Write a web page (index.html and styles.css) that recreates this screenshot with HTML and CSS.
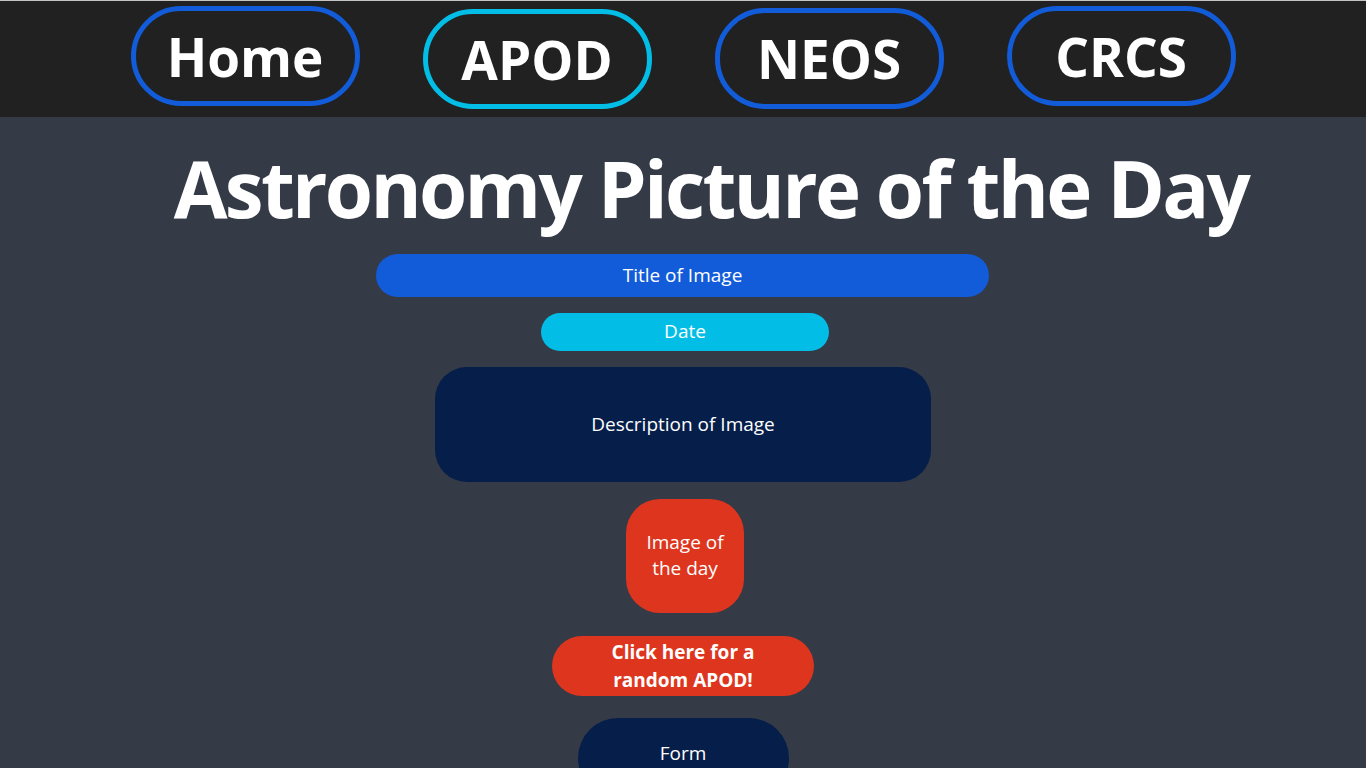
FILE: index.html
```html
<!DOCTYPE html>
<html lang="en">
<head>
<meta charset="utf-8">
<title>APOD</title>
<link rel="stylesheet" href="styles.css">
</head>
<body>
<nav class="nav">
  <a class="nav-btn" href="#">Home</a>
  <a class="nav-btn nav-btn--active" href="#">APOD</a>
  <a class="nav-btn nav-btn--neos" href="#">NEOS</a>
  <a class="nav-btn" href="#">CRCS</a>
</nav>
<main class="main">
  <h1 class="page-title">Astronomy Picture of the Day</h1>
  <div class="pill pill-title">Title of Image</div>
  <div class="pill pill-date">Date</div>
  <div class="pill pill-desc">Description of Image</div>
  <div class="pill pill-image">Image of<br>the day</div>
  <button class="pill pill-random">Click here for a<br>random APOD!</button>
  <div class="pill pill-form">Form</div>
</main>
</body>
</html>
```
FILE: styles.css
```css
* { box-sizing: border-box; }
html, body { margin: 0; padding: 0; }
body {
  background: #343a46;
  font-family: "Open Sans", "Liberation Sans", sans-serif;
  color: #fff;
  height: 768px;
  overflow: hidden;
}
.nav {
  background: #212121;
  border-top: 1px solid #c4c4c4;
  height: 117px;
  display: flex;
  justify-content: center;
  align-items: flex-start;
  gap: 63px;
  padding-top: 5px;
}
.nav-btn {
  width: 229px;
  height: 100px;
  border: 5px solid #125cda;
  border-radius: 50px;
  display: flex;
  align-items: center;
  justify-content: center;
  color: #fff;
  text-decoration: none;
  font-weight: 700;
  font-size: 53px;
  letter-spacing: 0;
}
.nav-btn--active { border-color: #02bee6; margin-top: 3px; }
.nav-btn--neos { margin-top: 2px; height: 101px; }
.main {
  display: flex;
  flex-direction: column;
  align-items: center;
}
.page-title {
  margin: 16px 0 10px 56px;
  font-family: "Open Sans", "Liberation Sans", sans-serif;
  font-size: 78px;
  font-weight: 700;
  line-height: 111px;
  letter-spacing: -2.7px;
}
.pill {
  display: flex;
  align-items: center;
  justify-content: center;
  text-align: center;
  color: #fff;
  font-family: "Open Sans", "Liberation Sans", sans-serif;
  font-size: 19px;
  font-weight: 400;
  border: none;
  padding: 0 0 2px;
}
.pill-title {
  width: 613px; height: 43px; background: #125cda; border-radius: 22px;
  margin-left: -1px;
}
.pill-date {
  width: 288px; height: 38px; background: #02bee6; border-radius: 19px;
  margin-top: 16px; margin-left: 4px;
}
.pill-desc {
  width: 496px; height: 115px; background: #061e4a; border-radius: 32px;
  margin-top: 16px;
}
.pill-image {
  width: 118px; height: 114px; background: #de361e; border-radius: 34px;
  margin-top: 17px; margin-left: 4px; line-height: 26px;
}
.pill-random {
  width: 262px; height: 60px; background: #de361e; border-radius: 30px;
  margin-top: 23px; font-weight: 700; line-height: 28px; font-size: 19px;
  padding: 0;
}
.pill-form {
  width: 211px; height: 80px; background: #061e4a; border-radius: 42px;
  margin-top: 22px; padding-bottom: 10px;
}
```
